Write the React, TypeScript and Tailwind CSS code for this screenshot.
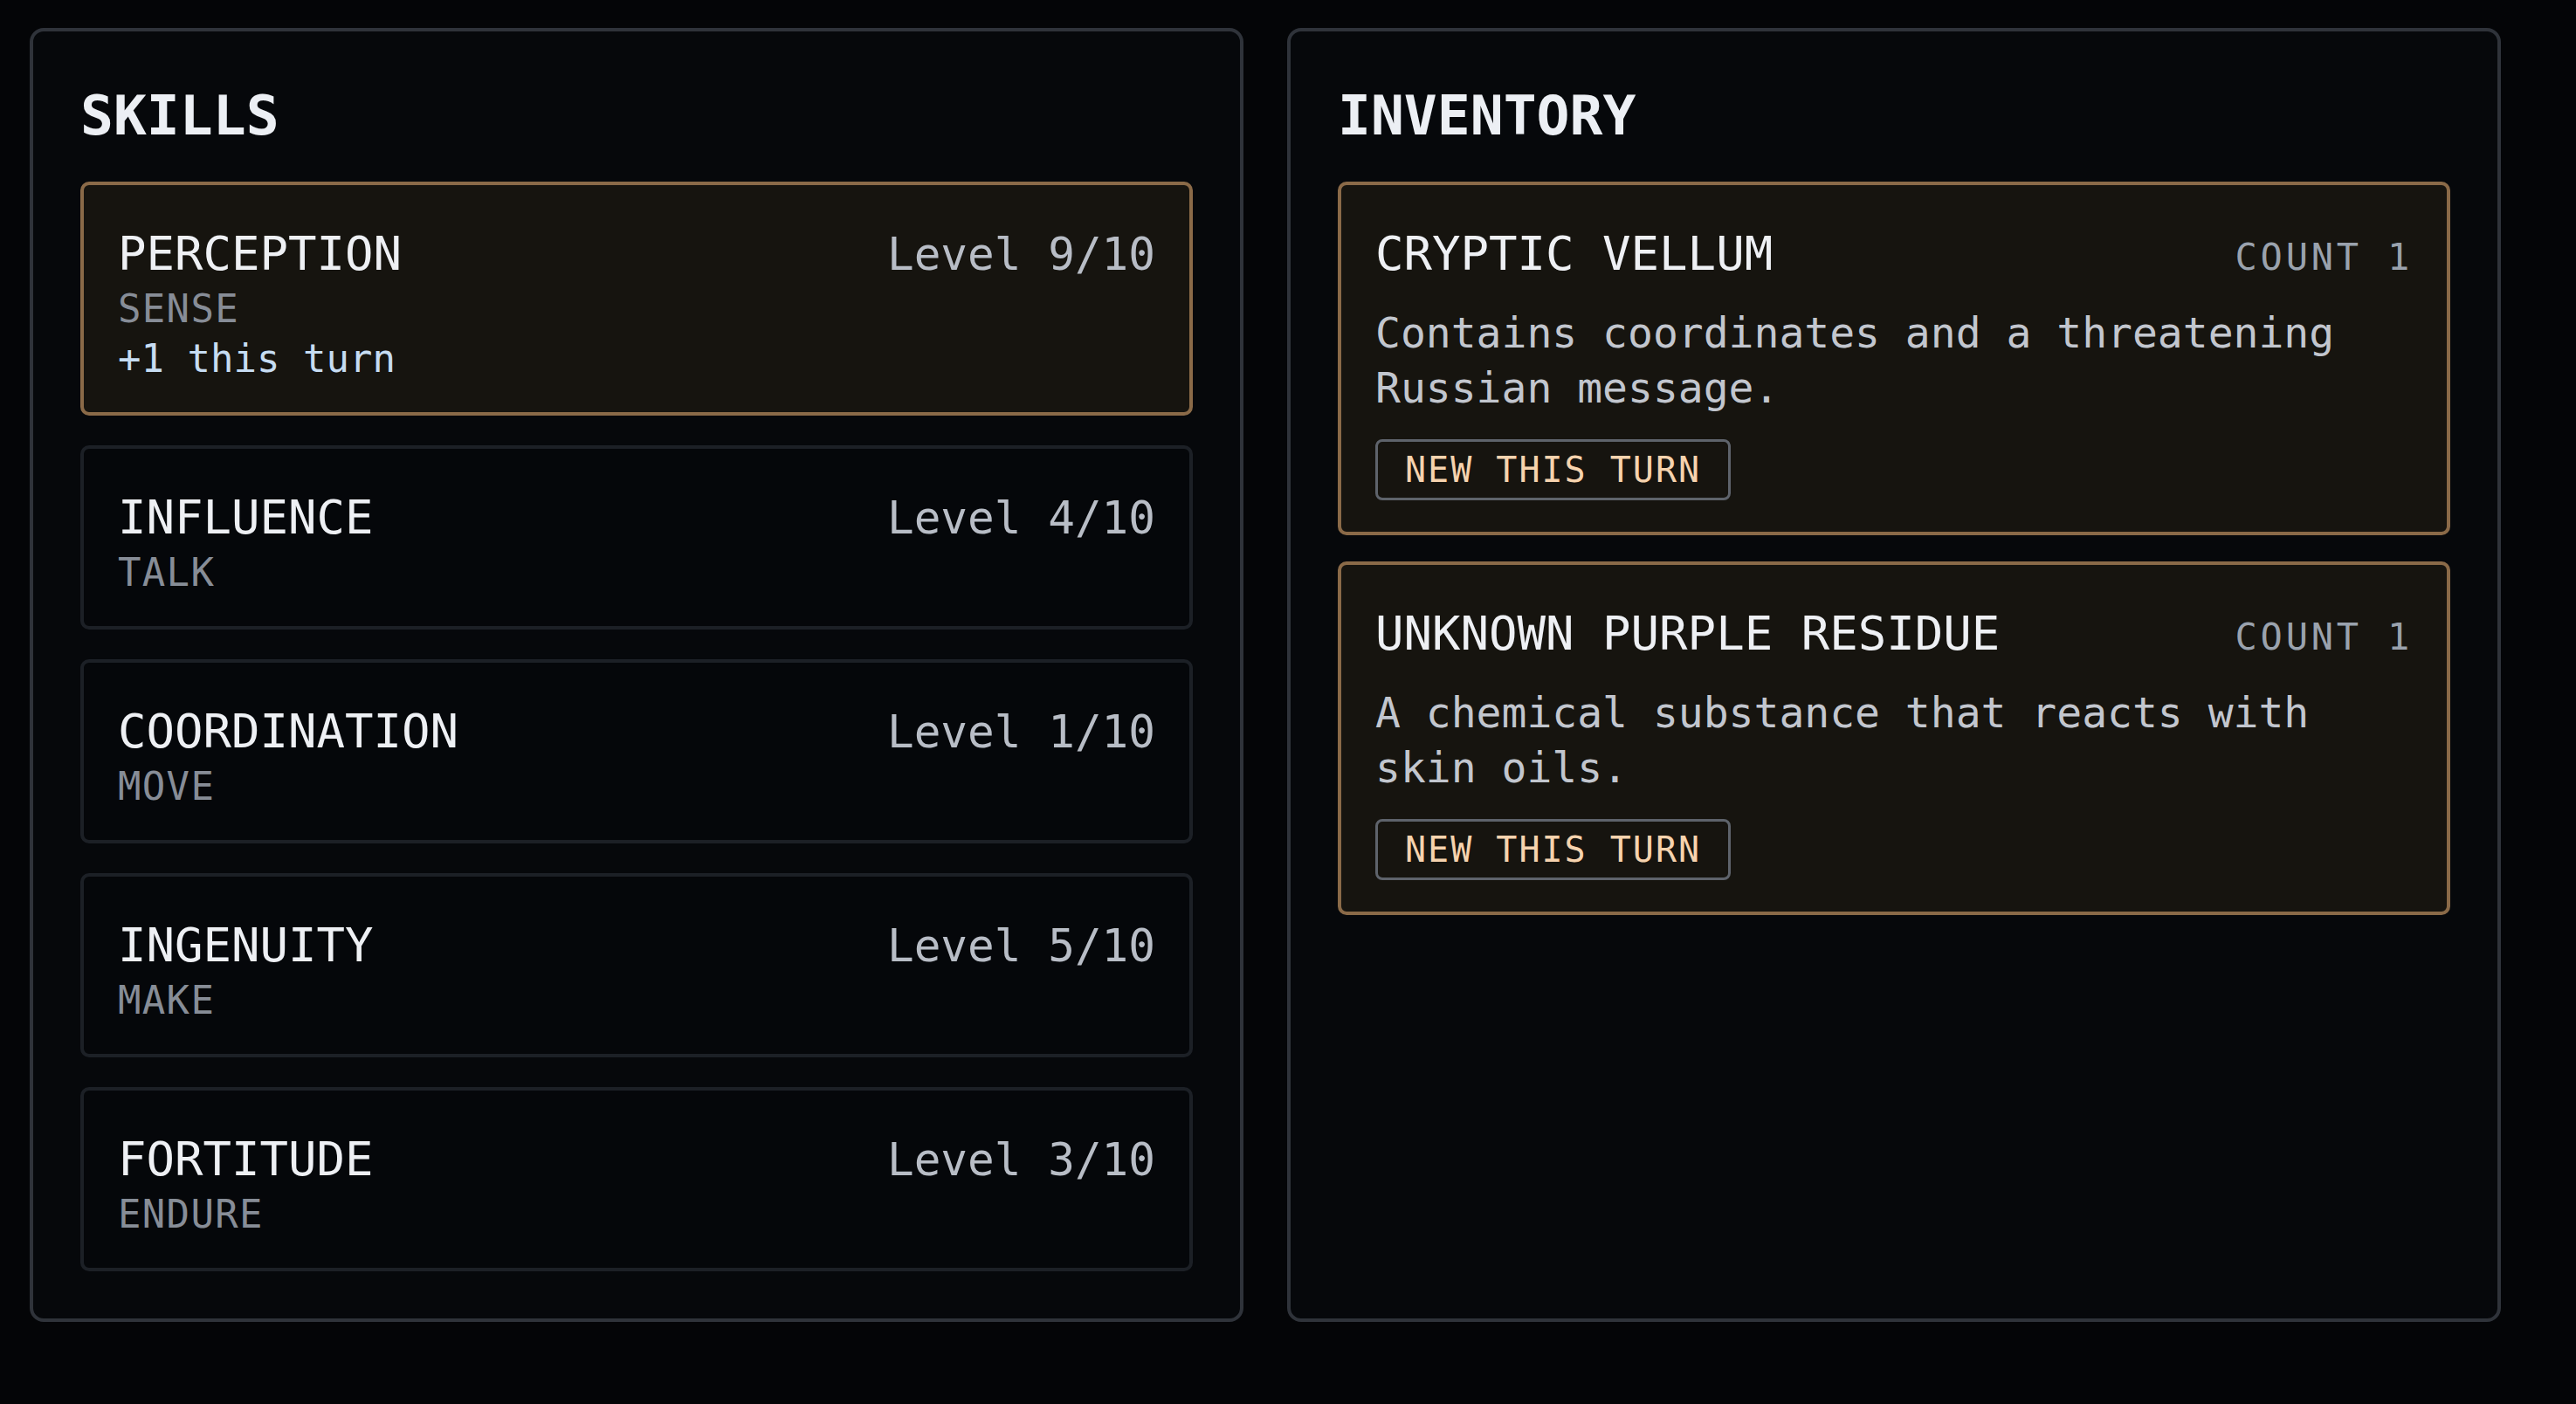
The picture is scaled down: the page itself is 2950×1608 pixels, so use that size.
type Skill = {
  name: string;
  verb: string;
  level: number;
  note?: string;
  active?: boolean;
};

type Item = {
  name: string;
  count: number;
  desc: string;
  isNew?: boolean;
};

const skills: Skill[] = [
  { name: "PERCEPTION", verb: "SENSE", level: 9, note: "+1 this turn", active: true },
  { name: "INFLUENCE", verb: "TALK", level: 4 },
  { name: "COORDINATION", verb: "MOVE", level: 1 },
  { name: "INGENUITY", verb: "MAKE", level: 5 },
  { name: "FORTITUDE", verb: "ENDURE", level: 3 },
];

const items: Item[] = [
  {
    name: "CRYPTIC VELLUM",
    count: 1,
    desc: "Contains coordinates and a threatening Russian message.",
    isNew: true,
  },
  {
    name: "UNKNOWN PURPLE RESIDUE",
    count: 1,
    desc: "A chemical substance that reacts with skin oils.",
    isNew: true,
  },
];

function Panel({ title, children }: { title: string; children: React.ReactNode }) {
  return (
    <section className="rounded-[16px] border-[4px] border-[#2f333a] bg-[#06080b] p-[54px]">
      <h2 className="mb-[37px] pt-[5px] text-[63px] font-bold leading-[76px] text-[#eceff4]">{title}</h2>
      {children}
    </section>
  );
}

function SkillCard({ skill }: { skill: Skill }) {
  const tone = skill.active
    ? "border-[#8a6a48] bg-[#16140f]"
    : "border-[#1c2026] bg-[#05070a]";
  return (
    <div className={`rounded-[10px] border-[4px] px-[39px] pt-[47px] pb-[33px] ${tone}`}>
      <div className="flex items-baseline justify-between">
        <span className="text-[54px] leading-[64px] text-[#eef0f4]">{skill.name}</span>
        <span className="text-[51px] leading-[64px] text-[#b8bdc6]">Level {skill.level}/10</span>
      </div>
      <div className="mt-[1px] text-[44px] leading-[57px] tracking-[0.03em] text-[#878d97]">
        {skill.verb}
      </div>
      {skill.note && (
        <div className="text-[44px] leading-[57px] text-[#c6dcf2]">{skill.note}</div>
      )}
    </div>
  );
}

function ItemCard({ item }: { item: Item }) {
  return (
    <div className="rounded-[10px] border-[4px] border-[#8a6a48] bg-[#16140f] px-[39px] pt-[47px] pb-[36px]">
      <div className="flex items-baseline justify-between">
        <span className="text-[54px] leading-[64px] text-[#eef0f4]">{item.name}</span>
        <span className="text-[42px] leading-[64px] tracking-[0.09em] text-[#9aa2ad]">
          COUNT {item.count}
        </span>
      </div>
      <p className="mt-[23px] text-[48px] leading-[63px] text-[#c2c6ce]">{item.desc}</p>
      {item.isNew && (
        <div className="mt-[27px] flex">
          <span className="rounded-[8px] border-[3px] border-[#5e636b] px-[31px] py-[8px] text-[40px] leading-[48px] tracking-[0.05em] text-[#f6d3ae]">
            NEW THIS TURN
          </span>
        </div>
      )}
    </div>
  );
}

export default function App() {
  return (
    <main className="min-h-screen bg-[#040507] pl-[34px] pt-[32px] font-['DejaVu_Sans_Mono',monospace]">
      <div className="grid grid-cols-[1390px_1390px] gap-x-[50px]">
        {/* skills */}
        <Panel title="SKILLS">
          <div className="flex flex-col gap-[34px]">
            {skills.map((s) => (
              <SkillCard key={s.name} skill={s} />
            ))}
          </div>
        </Panel>

        {/* inventory */}
        <Panel title="INVENTORY">
          <div className="flex flex-col gap-[30px]">
            {items.map((it) => (
              <ItemCard key={it.name} item={it} />
            ))}
          </div>
        </Panel>
      </div>
    </main>
  );
}
